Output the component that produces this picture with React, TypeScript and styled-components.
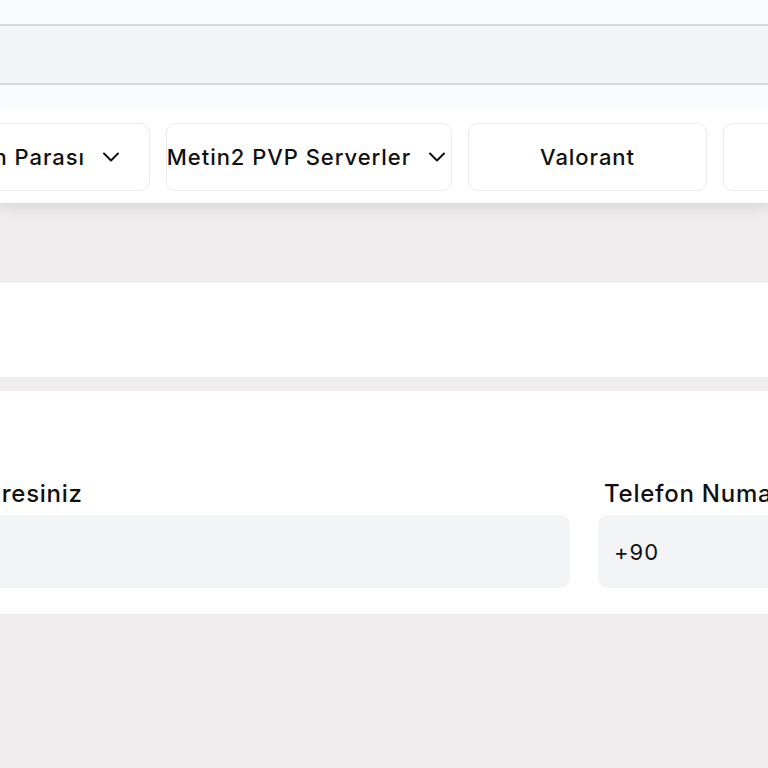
import React from "react";
import styled, { createGlobalStyle } from "styled-components";
import { ChevronDown } from "lucide-react";

const GlobalStyle = createGlobalStyle`
  html, body {
    margin: 0;
    padding: 0;
    background: #efedee;
    font-family: Inter, "Noto Sans", "Liberation Sans", sans-serif;
    color: #111111;
    overflow: hidden;
  }
  * { box-sizing: border-box; }
`;

type Category = { label: string; width: number; menu?: boolean };

const categories: Category[] = [
  { label: "Oyun Parası", width: 227, menu: true },
  { label: "Metin2 PVP Serverler", width: 286, menu: true },
  { label: "Valorant", width: 239 },
  { label: "PUBG Mobile", width: 260 },
];

const App = () => {
  return (
    <Page>
      <GlobalStyle />
      <TopStrip />
      <Rule />
      <ToolBand />
      <Rule />
      <SubStrip />
      <Nav>
        <NavTrack>
          {categories.map((c) => (
            <NavButton key={c.label} $width={c.width}>
              <span>{c.label}</span>
              {c.menu && <ChevronDown size={28} strokeWidth={1.7} />}
            </NavButton>
          ))}
        </NavTrack>
      </Nav>
      <Spacer $height={80} />
      <Panel $height={94} />
      <Spacer $height={14} />
      <FormPanel>
        <FieldGrid>
          <Field>
            <Label>E-Posta Adresiniz</Label>
            <Input />
          </Field>
          <Field>
            <Label>Telefon Numarası</Label>
            <Input>+90</Input>
          </Field>
        </FieldGrid>
      </FormPanel>
    </Page>
  );
};

const Page = styled.div`
  width: 100%;
  min-height: 768px;
  overflow: hidden;
`;

const TopStrip = styled.div`
  height: 24px;
  background: #f9fafb;
`;

const Rule = styled.div`
  height: 2px;
  background: #d6d8dc;
`;

const ToolBand = styled.div`
  height: 57px;
  background: #f3f4f6;
`;

const SubStrip = styled.div`
  height: 25px;
  background: linear-gradient(#f9fafb 70%, #ffffff);
`;

const Nav = styled.nav`
  position: relative;
  z-index: 1;
  height: 93px;
  background: #ffffff;
  box-shadow: 0 6px 14px rgba(0, 0, 0, 0.09);
  overflow: hidden;
`;

const NavTrack = styled.div`
  display: flex;
  gap: 16px;
  padding-top: 13px;
  margin-left: -77px;
`;

const NavButton = styled.div<{ $width: number }>`
  flex: 0 0 ${(p) => p.$width}px;
  min-width: 0;
  height: 68px;
  display: flex;
  align-items: center;
  justify-content: center;
  gap: 12px;
  border: 1px solid #ebebeb;
  border-radius: 10px;
  background: #ffffff;
  font-size: 22px;
  font-weight: 500;
  letter-spacing: 0.95px;
  white-space: nowrap;
  color: #111111;

  svg {
    flex: none;
  }
`;

const Spacer = styled.div<{ $height: number }>`
  height: ${(p) => p.$height}px;
`;

const Panel = styled.div<{ $height: number }>`
  height: ${(p) => p.$height}px;
  background: #ffffff;
`;

const FormPanel = styled.section`
  height: 223px;
  background: #ffffff;
  padding-top: 90px;
  overflow: hidden;
`;

const FieldGrid = styled.div`
  display: grid;
  grid-template-columns: 710px 710px;
  column-gap: 28px;
  margin-left: -140px;
`;

const Field = styled.div`
  display: flex;
  flex-direction: column;
  gap: 8px;
`;

const Label = styled.label`
  padding-left: 6px;
  font-size: 24px;
  font-weight: 500;
  letter-spacing: 0.75px;
  line-height: 26px;
  white-space: nowrap;
  color: #111111;
`;

const Input = styled.div`
  height: 73px;
  display: flex;
  align-items: center;
  padding: 0 16px;
  border-radius: 10px;
  background: #f3f4f6;
  font-size: 22px;
  letter-spacing: 1px;
  color: #111111;
`;

export default App;
